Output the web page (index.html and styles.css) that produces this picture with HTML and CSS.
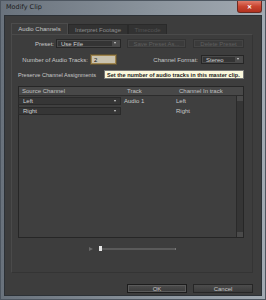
FILE: index.html
```html
<!DOCTYPE html>
<html lang="en">
<head>
    <meta charset="UTF-8">
    <title>Modify Clip</title>
    <link rel="stylesheet" href="styles.css">
</head>
<body>
    <!-- Dialog Window -->
    <div class="window">
        <div class="titlebar">
            <span class="title">Modify Clip</span>
            <span class="close-btn">&#x2715;</span>
        </div>
        <div class="client">
            <!-- Tabs -->
            <div class="tabs">
                <span class="tab active">Audio Channels</span>
                <span class="tab tab-interpret">Interpret Footage</span>
                <span class="tab dim">Timecode</span>
            </div>
            <div class="panel">
                <!-- Preset -->
                <div class="row row-preset">
                    <span class="label lbl-preset">Preset:</span>
                    <span class="select sel-preset">Use File<span class="arrow"></span></span>
                    <span class="btn disabled btn-save">Save Preset As...</span>
                    <span class="btn disabled btn-delete">Delete Preset</span>
                </div>
                <!-- Tracks / Format -->
                <div class="row row-tracks">
                    <span class="label lbl-tracks">Number of Audio Tracks:</span>
                    <span class="input">2</span>
                    <span class="label lbl-format">Channel Format:</span>
                    <span class="select sel-format">Stereo<span class="arrow"></span></span>
                </div>
                <div class="row row-preserve">
                    <span class="label lbl-preserve">Preserve Channel Assignments</span>
                    <span class="tooltip">Set the number of audio tracks in this master clip.</span>
                </div>
                <!-- Channel Table -->
                <div class="table">
                    <div class="thead">
                        <span class="col-src">Source Channel</span>
                        <span class="col-track">Track</span>
                        <span class="col-chan">Channel In track</span>
                    </div>
                    <div class="tbody">
                        <div class="rows">
                            <div class="trow">
                                <span class="select cell-select">Left<span class="arrow"></span></span>
                                <span class="col-track">Audio 1</span>
                                <span class="col-chan">Left</span>
                            </div>
                            <div class="trow">
                                <span class="select cell-select">Right<span class="arrow"></span></span>
                                <span class="col-track"></span>
                                <span class="col-chan">Right</span>
                            </div>
                        </div>
                        <div class="scrollbar">
                            <span class="sb-arrow up"></span>
                            <span class="sb-arrow down"></span>
                        </div>
                    </div>
                </div>
                <!-- Preview Player -->
                <div class="player">
                    <span class="play"></span>
                    <span class="track-bar"><span class="knob"></span></span>
                </div>
            </div>
            <!-- Actions -->
            <div class="actions">
                <span class="btn dlg-btn default">OK</span>
                <span class="btn dlg-btn">Cancel</span>
            </div>
        </div>
    </div>
</body>
</html>
```

FILE: styles.css
```css
body {
    margin: 0;
    background: #3e3e3e;
    font-family: "Liberation Sans", Arial, sans-serif;
    font-size: 6px;
    color: #c8c8c8;
}
.window {
    width: 266px;
    height: 300px;
    box-sizing: border-box;
    display: flex;
    flex-direction: column;
    background: linear-gradient(90deg, #69727c, #8c959e 60%, #a2aab2);
    border: 1px solid #4d5660;
    padding: 0 3px 3px 3px;
}
.titlebar {
    height: 14px;
    display: flex;
    align-items: center;
    justify-content: space-between;
    flex-shrink: 0;
}
.title {
    color: #1c1c1c;
    font-family: "DejaVu Sans", sans-serif;
    font-size: 6.5px;
    padding-left: 2px;
    margin-top: -2px;
}
.close-btn {
    width: 23px;
    height: 11px;
    margin-top: -3px;
    background: linear-gradient(#e07b6a, #c8442f 50%, #b13220);
    border: 1px solid #6b2a22;
    border-top: none;
    border-radius: 0 0 3px 3px;
    color: #fff;
    font-size: 6px;
    font-weight: bold;
    display: flex;
    align-items: center;
    justify-content: center;
}
.client {
    flex: 1;
    background: #3d3d3d;
    border: 1px solid #2c3136;
    display: flex;
    flex-direction: column;
}
.tabs {
    display: flex;
    margin: 7px 0 0 6px;
    height: 11px;
}
.tab {
    box-sizing: border-box;
    display: flex;
    align-items: center;
    justify-content: center;
    white-space: nowrap;
    background: #323232;
    border: 1px solid #2a2a2a;
    border-bottom: none;
    color: #8e8e8e;
    margin-top: 1px;
}
.tab.active {
    width: 57px;
    background: #3d3d3d;
    color: #c8c8c8;
    border-color: #4c4c4c;
    margin-top: 0;
}
.tab-interpret {
    width: 60px;
}
.tab.dim {
    color: #555;
    width: 39px;
}
.panel {
    margin: 0 8px 0 6px;
    height: 233px;
    border: 1px solid #4a4a4a;
    border-right-color: #343434;
    border-bottom-color: #343434;
    padding: 4px 0 0 6px;
    display: flex;
    flex-direction: column;
}
.row {
    display: flex;
    align-items: center;
    height: 9px;
}
.label {
    white-space: nowrap;
}
.lbl-preset {
    width: 36px;
    text-align: right;
    margin-right: 2px;
}
.select {
    position: relative;
    box-sizing: border-box;
    height: 9px;
    background: #343434;
    border: 1px solid #262626;
    box-shadow: inset 0 0 0 1px #4a4a4a;
    padding-left: 4px;
    display: flex;
    align-items: center;
    color: #d0d0d0;
}
.arrow {
    position: absolute;
    right: 1px;
    top: 1px;
    width: 7px;
    height: 5px;
    background: #4b4b4b;
}
.arrow::after {
    content: "";
    position: absolute;
    left: 2px;
    top: 1px;
    border-left: 1.5px solid transparent;
    border-right: 1.5px solid transparent;
    border-top: 2.5px solid #cfcfcf;
}
.sel-preset {
    width: 65px;
}
.btn {
    box-sizing: border-box;
    height: 9px;
    display: flex;
    align-items: center;
    justify-content: center;
    border: 1px solid #272727;
    background: linear-gradient(#474747, #3a3a3a);
    color: #c8c8c8;
    white-space: nowrap;
}
.btn.disabled {
    background: #3b3b3b;
    border-color: #333;
    color: #5f5f5f;
    box-shadow: inset 0 0 0 1px #444;
}
.btn-save {
    width: 59px;
    margin-left: 6px;
}
.btn-delete {
    width: 51px;
    margin-left: 7px;
}
.row-tracks {
    margin-top: 7px;
}
.lbl-tracks {
    width: 70px;
    text-align: right;
    margin-right: 3px;
}
.input {
    box-sizing: border-box;
    width: 25px;
    height: 9px;
    background: #c9c2ae;
    border: 1px solid #a0864e;
    box-shadow: 0 0 0 1px #5e5134;
    color: #111;
    padding-left: 2px;
    display: flex;
    align-items: center;
}
.lbl-format {
    margin-left: auto;
    margin-right: 3px;
}
.sel-format {
    width: 43px;
    margin-right: 8px;
}
.row-preserve {
    position: relative;
    margin-top: 6px;
    height: 9px;
}
.lbl-preserve {
    font-size: 5.6px;
}
.tooltip {
    position: absolute;
    left: 86px;
    top: 0;
    width: 140px;
    height: 9px;
    box-sizing: border-box;
    background: #fbf8dc;
    border: 1px solid #767676;
    color: #1a1a1a;
    font-weight: bold;
    font-size: 5.6px;
    display: flex;
    align-items: center;
    padding-left: 2px;
    white-space: nowrap;
    overflow: hidden;
}
.table {
    margin-top: 7px;
    width: 226px;
    height: 152px;
    border: 1px solid #262626;
    background: #3f3f3f;
    display: flex;
    flex-direction: column;
    box-sizing: border-box;
}
.thead {
    display: flex;
    height: 8px;
    align-items: center;
    background: #484848;
    border-bottom: 1px solid #2c2c2c;
    color: #c0c0c0;
    padding-left: 3px;
}
.col-src {
    width: 102px;
}
.col-track {
    width: 52px;
    padding-left: 3px;
}
.col-chan {
    flex: 1;
}
.tbody {
    flex: 1;
    display: flex;
}
.rows {
    flex: 1;
    padding-top: 1px;
}
.trow {
    display: flex;
    align-items: center;
    height: 8px;
    margin-bottom: 2px;
}
.cell-select {
    width: 103px;
    height: 8px;
    margin-left: -1px;
    box-shadow: none;
    background: #363636;
    border-color: #2a2a2a;
}
.trow .arrow {
    background: none;
}
.scrollbar {
    width: 6px;
    background: #353535;
    border-left: 1px solid #2a2a2a;
    display: flex;
    flex-direction: column;
    justify-content: space-between;
}
.sb-arrow {
    height: 5px;
    background: #4a4a4a;
}
.player {
    display: flex;
    align-items: center;
    margin: 7px 0 0 71px;
    height: 7px;
}
.play {
    width: 0;
    height: 0;
    border-top: 2.5px solid transparent;
    border-bottom: 2.5px solid transparent;
    border-left: 4px solid #6a6a6a;
}
.track-bar {
    position: relative;
    margin-left: 6px;
    width: 76px;
    height: 2px;
    background: #5a5a5a;
    border-right: 1px solid #777;
}
.knob {
    position: absolute;
    left: 0;
    top: -2px;
    width: 3px;
    height: 5px;
    background: #e6e6e6;
}
.actions {
    display: flex;
    justify-content: flex-end;
    gap: 6px;
    margin: 11px 8px 0 0;
}
.dlg-btn {
    width: 60px;
    height: 9px;
    border-color: #262626;
    background: linear-gradient(#4c4c4c, #3b3b3b);
}
.dlg-btn.default {
    border-color: #1c1c1c;
    box-shadow: inset 0 0 0 1px #5a5a5a;
}
```
